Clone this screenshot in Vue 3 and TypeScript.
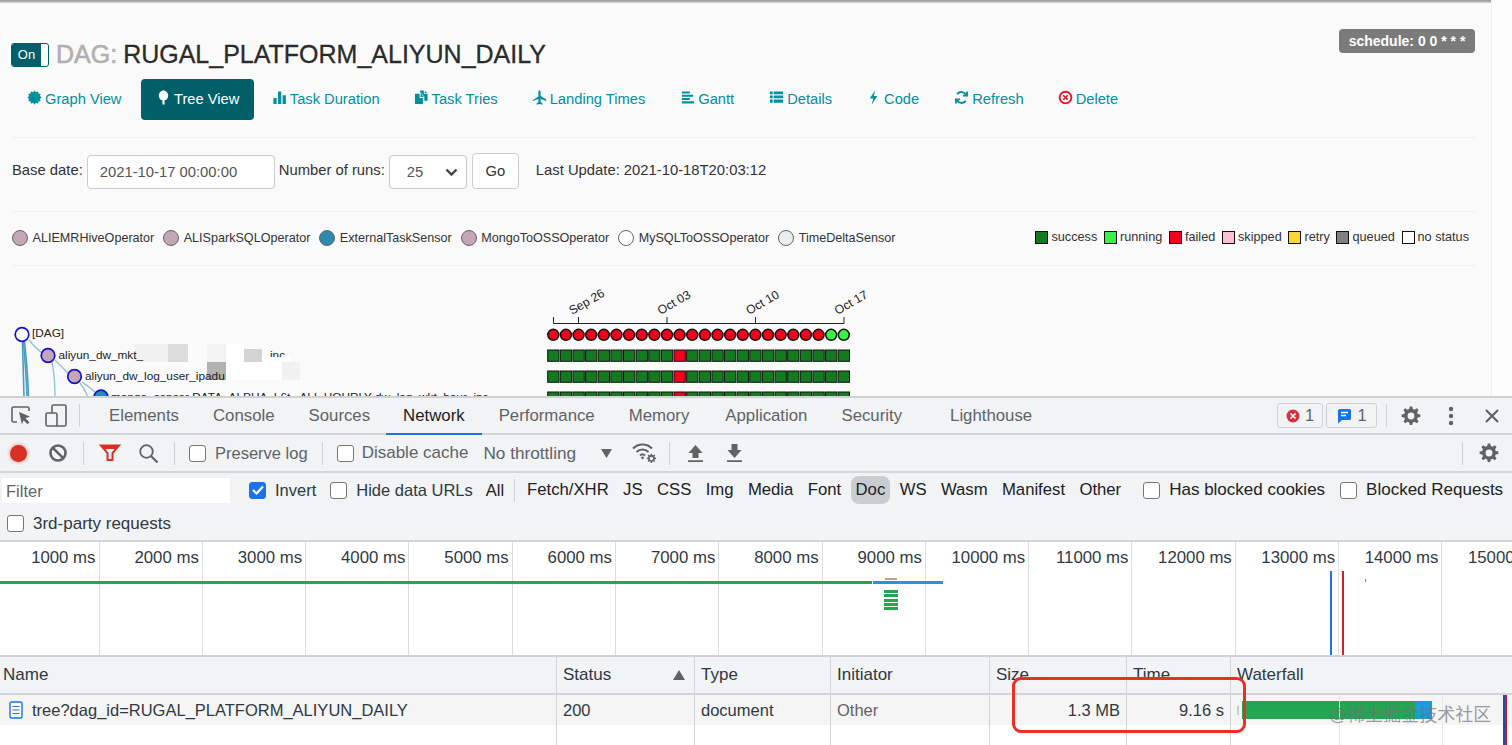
<script setup lang="ts">
const burst = (() => {
  let d = ''
  for (let i = 0; i < 24; i++) {
    const r = i % 2 ? 5.9 : 7.6
    const a = (i * Math.PI) / 12
    d += `${i ? 'L' : 'M'}${(8 + r * Math.cos(a)).toFixed(2)} ${(8 + r * Math.sin(a)).toFixed(2)}`
  }
  return d + 'z'
})()

const navItems = [
  { label: 'Graph View', d: burst },
  { label: 'Tree View', active: true, d: 'M8 .5C5.2.5 3 3 3 6c0 2.8 2 4.6 3.8 4.9V15.5h2.4v-4.6C11 10.6 13 8.8 13 6c0-3-2.2-5.500-5-5.500z' },
  { label: 'Task Duration', d: 'M1.500 8.500h3.500V15H1.500zM6.400 1.500h3.500V15H6.400zM11.300 5.500h3.500V15h-3.500z' },
  { label: 'Task Tries', d: 'M1 4h5v4.500h3.500V15H1zM7 3.500 7 7.500h3.500zM6.500.5h4v3.500h4v7.500h-3.500V6.800L6.500 2.500zM11.500.8l2.700 2.500h-2.700z' },
  { label: 'Landing Times', d: 'M8 .3c.8 0 1.200 1.200 1.200 2.700v3l6 4v1.700l-6-2v3.200l2 1.500v1.400L8 14.800l-3.200 1v-1.400l2-1.500v-3.200l-6 2V11l6-4V3C6.800 1.500 7.200.3 8 .3z' },
  { label: 'Gantt', cls: 'nudge', d: 'M2 1.500h8.500v2.200H2zM2 5h12v2.200H2zM2 8.500h8.500v2.200H2zM2 12h13v2.500H2z' },
  { label: 'Details', cls: 'nudge', d: 'M1 1.500h3v3H1zM5 1.500h10v3H5zM1 5.800h3v3H1zM5 5.800h10v3H5zM1 10h3v3.500H1zM5 10h10v3.500H5z' },
  { label: 'Code', d: 'M9.800 .3 4 9h3.700L6 15.800 12 6.500H8.300z' },
  { label: 'Refresh', cls: 'nudge', stroke: true, d: 'M13 5.500A5.800 5.800 0 0 0 3.300 4.300M3 10.500a5.800 5.800 0 0 0 9.700 1.200M14 1.500v4.500h-4.500M2 14.500V10h4.500' },
  { label: 'Delete', danger: true },
]

const operators = [
  { name: 'ALIEMRHiveOperator', color: '#c4a6b5' },
  { name: 'ALISparkSQLOperator', color: '#c4a6b5' },
  { name: 'ExternalTaskSensor', color: '#2b8cb0' },
  { name: 'MongoToOSSOperator', color: '#c4a6b5' },
  { name: 'MySQLToOSSOperator', color: '#ffffff' },
  { name: 'TimeDeltaSensor', color: '#e9edee' },
]

const states = [
  { name: 'success', color: '#157a1f' },
  { name: 'running', color: '#3cf04a' },
  { name: 'failed', color: '#f2001c' },
  { name: 'skipped', color: '#ffc0d4' },
  { name: 'retry', color: '#ffd52e' },
  { name: 'queued', color: '#808080' },
  { name: 'no status', color: '#ffffff' },
]

const runs = Array.from({ length: 24 }, (_, i) => 553.3 + i * 12.63)
const gridRows = [350, 371, 392]
const dateTicks = [
  { x: 578.500, label: 'Sep 26' },
  { x: 667, label: 'Oct 03' },
  { x: 755.500, label: 'Oct 10' },
  { x: 844, label: 'Oct 17' },
]
const treeNodes = [
  { x: 22, y: 334.500, fill: '#ffffff', label: '[DAG]', lx: 32, ly: 337 },
  { x: 48, y: 355.500, fill: '#c4a6b5', label: 'aliyun_dw_mkt_', lx: 58.500, ly: 359 },
  { x: 74.500, y: 376.500, fill: '#c4a6b5', label: 'aliyun_dw_log_user_ipadu', lx: 85, ly: 380 },
  { x: 101, y: 397, fill: '#2b8cb0', label: 'mongo_sensor DATA_ALPHA_L6t_ ALI_HOURLY dw_log_wkt_hour_inc', lx: 111, ly: 401 },
]
const mosaic = [
  { x: 135, y: 344, w: 33, h: 18, c: '#f1f1f1' },
  { x: 168, y: 344, w: 20, h: 18, c: '#dcdcdc' },
  { x: 207, y: 344, w: 19, h: 18, c: '#f4f4f4' },
  { x: 226, y: 344, w: 18, h: 36, c: '#ffffff' },
  { x: 244, y: 349, w: 18, h: 13, c: '#d4d4d4' },
  { x: 262, y: 362, w: 20, h: 18, c: '#ffffff' },
  { x: 207, y: 362, w: 19, h: 18, c: '#b2b2b2' },
  { x: 244, y: 362, w: 18, h: 18, c: '#ffffff' },
  { x: 282, y: 362, w: 18, h: 18, c: '#f1f1f1' },
]

const tabs = [
  { name: 'Elements', cls: 'w1' },
  { name: 'Console', cls: '' },
  { name: 'Sources', cls: '' },
  { name: 'Network', cls: 'active' },
  { name: 'Performance', cls: '' },
  { name: 'Memory', cls: '' },
  { name: 'Application', cls: 'mid' },
  { name: 'Security', cls: '' },
  { name: 'Lighthouse', cls: 'far' },
]
const types = ['Fetch/XHR', 'JS', 'CSS', 'Img', 'Media', 'Font', 'Doc', 'WS', 'Wasm', 'Manifest', 'Other']
const ticks = Array.from({ length: 15 }, (_, i) => `${(i + 1) * 1000} ms`)
const columns = ['Name', 'Status', 'Type', 'Initiator', 'Size', 'Time', 'Waterfall']
const gear = 'M8.900 1h-1.800l-.4 1.900-1.300.5L3.800 2.300 2.500 3.600l1.100 1.600-.5 1.300-1.900.4v1.800l1.900.4.5 1.300-1.100 1.600 1.300 1.300 1.600-1.100 1.300.5.4 1.900h1.800l.4-1.900 1.300-.5 1.600 1.100 1.300-1.300-1.100-1.600.5-1.300 1.900-.4V6.900l-1.900-.4-.5-1.300 1.100-1.600-1.300-1.300-1.600 1.100-1.300-.5zM8 5.500a2.500 2.500 0 1 1 0 5 2.500 2.500 0 0 1 0-5z'
</script>

<template>
  <div class="page">
    <section class="airflow">
      <div class="main">
        <div class="topbar"></div>
        <div class="content">
          <header class="title-row">
            <h1 class="title">
              <span class="toggle"><span class="toggle-on">On</span><span class="toggle-knob"></span></span>
              <span class="dag">DAG:</span>
              <span>RUGAL_PLATFORM_ALIYUN_DAILY</span>
            </h1>
            <span class="schedule">schedule: 0 0 * * *</span>
          </header>

          <nav class="nav">
            <a v-for="item in navItems" :key="item.label" class="nav-link" :class="[item.cls, { active: item.active }]">
              <svg v-if="item.danger" class="nav-icon" viewBox="0 0 16 16">
                <circle cx="8" cy="8" r="6.200" fill="none" stroke="#e8112d" stroke-width="2" />
                <path d="M5.600 5.600l4.800 4.800M10.400 5.600l-4.800 4.800" stroke="#e8112d" stroke-width="1.800" />
              </svg>
              <svg v-else-if="item.stroke" class="nav-icon" viewBox="0 0 16 16">
                <path :d="item.d" fill="none" stroke="currentColor" stroke-width="2" />
              </svg>
              <svg v-else class="nav-icon" viewBox="0 0 16 16"><path :d="item.d" fill="currentColor" /></svg>
              <span>{{ item.label }}</span>
            </a>
          </nav>

          <form class="run-form" @submit.prevent>
            <label class="form-label">Base date:</label>
            <span class="field date-field">2021-10-17 00:00:00</span>
            <label class="form-label">Number of runs:</label>
            <span class="field run-field">
              <span>25</span>
              <svg width="13" height="9" viewBox="0 0 13 9"><path d="M1.500 1.500 6.500 6.500l5-5" fill="none" stroke="#444" stroke-width="2.400" /></svg>
            </span>
            <button class="go">Go</button>
            <span class="form-label last-update">Last Update: 2021-10-18T20:03:12</span>
          </form>

          <div class="legend-row">
            <div class="operators">
              <span v-for="op in operators" :key="op.name" class="operator">
                <i class="op-dot" :style="{ background: op.color }"></i>{{ op.name }}
              </span>
            </div>
            <div class="states">
              <span v-for="s in states" :key="s.name" class="state">
                <i class="state-box" :style="{ background: s.color }"></i>{{ s.name }}
              </span>
            </div>
          </div>

          <div class="tree">
            <svg class="tree-svg" width="1491" height="130" viewBox="0 266 1491 130">
              <rect v-for="(m, i) in mosaic" :key="i" :x="m.x" :y="m.y" :width="m.w" :height="m.h" :fill="m.c" />
              <g fill="none" stroke="#8fc0d8" stroke-width="1.300">
                <path d="M29 340C34 346 38 350 42 353" />
                <path d="M52 362C54 372 55 384 55 397" />
                <path d="M55 360C60 365 64 369 68 373" />
                <path d="M80 383C84 388 86 392 88 397" />
                <path d="M82 382C86 385 91 388 95 392" />
              </g>
              <g fill="none" stroke="#4a9cc0" stroke-width="1.600">
                <path d="M22.500 342C23 360 23.500 380 24 397" />
                <path d="M23.500 342C25 360 26.500 380 27 397" />
                <path d="M24.500 342C26.500 360 28 380 28.500 397" />
              </g>
              <g v-for="n in treeNodes" :key="n.label">
                <circle :cx="n.x" :cy="n.y" r="6.800" :fill="n.fill" stroke="#1212d6" stroke-width="1.700" />
                <text :x="n.lx" :y="n.ly" class="tree-label">{{ n.label }}</text>
              </g>
              <text x="270" y="359" class="tree-label">inc</text>
              <rect x="262" y="357" width="28" height="5" fill="#ffffff" />

              <path d="M553.500 317v6.500H844V317M578.500 317v6M667 317v6M755.500 317v6" fill="none" stroke="#222" stroke-width="1" />
              <text v-for="t in dateTicks" :key="t.label" class="date-label"
                :transform="`translate(${t.x - 6.500} 315) rotate(-30)`">{{ t.label }}</text>
              <circle v-for="(x, i) in runs" :key="'c' + i" :cx="x" cy="334.800" r="5.500"
                :fill="i >= 22 ? '#3cf04a' : '#f2001c'" stroke="#111" stroke-width="1.500" />
              <g v-for="y in gridRows" :key="y">
                <rect v-for="(x, i) in runs" :key="i" :x="x - 5.600" :y="y" width="11.300" height="11.300"
                  :fill="i === 10 ? '#f2001c' : '#157a1f'" stroke="#111" stroke-width="1" />
              </g>
            </svg>
          </div>
        </div>
      </div>
      <div class="gutter"></div>
    </section>

    <section class="devtools">
      <div class="bar tabs-bar">
        <svg class="ic inspect" width="28" height="24" viewBox="0 0 28 24">
          <path d="M21 7V4.500A1.500 1.500 0 0 0 19.500 3h-14A1.500 1.500 0 0 0 4 4.500v12A1.500 1.500 0 0 0 5.500 18H9" fill="none" stroke="#5f6368" stroke-width="1.600" />
          <path d="M11 8l11 4.500-4.500 1.800 4 4-2 2-4-4L14 20.500z" fill="#5f6368" />
        </svg>
        <svg class="ic device" width="24" height="24" viewBox="0 0 24 24">
          <path d="M8 9V2.500A1.500 1.500 0 0 1 9.500 1h11A1.500 1.500 0 0 1 22 2.500v18a1.500 1.500 0 0 1-1.500 1.500H13M3.500 9h8A1.500 1.500 0 0 1 13 10.500v10a1.500 1.500 0 0 1-1.500 1.500h-8A1.500 1.500 0 0 1 2 20.500v-10A1.500 1.500 0 0 1 3.500 9z" fill="none" stroke="#5f6368" stroke-width="1.600" />
        </svg>
        <i class="sep"></i>
        <div class="tabs">
          <span v-for="t in tabs" :key="t.name" class="tab" :class="t.cls">{{ t.name }}</span>
        </div>
        <div class="tabs-end">
          <span class="count-badge err">
            <svg width="14" height="14" viewBox="0 0 14 14"><circle cx="7" cy="7" r="6.500" fill="#d93040" /><path d="M4.500 4.500l5 5M9.500 4.500l-5 5" stroke="#fff" stroke-width="1.700" /></svg>
            1
          </span>
          <span class="count-badge msg">
            <svg width="16" height="16" viewBox="0 0 16 16"><path d="M2 2.500A1.500 1.500 0 0 1 3.500 1h10A1.500 1.500 0 0 1 15 2.500v8a1.500 1.500 0 0 1-1.500 1.500H6l-4 3.500z" fill="#1a73e8" /><path d="M5 4.500h7M5 7.500h5" stroke="#fff" stroke-width="1.500" /></svg>
            1
          </span>
          <i class="sep sep-end"></i>
          <svg class="gear g1" width="22" height="22" viewBox="0 0 16 16"><path :d="gear" fill="#5f6368" fill-rule="evenodd" /></svg>
          <svg class="kebab" width="6" height="20" viewBox="0 0 6 20"><circle cx="3" cy="3" r="2.200" fill="#5f6368" /><circle cx="3" cy="10" r="2.200" fill="#5f6368" /><circle cx="3" cy="17" r="2.200" fill="#5f6368" /></svg>
          <svg class="close" width="14" height="14" viewBox="0 0 14 14"><path d="M1 1l12 12M13 1 1 13" stroke="#5f6368" stroke-width="2.200" /></svg>
        </div>
      </div>

      <div class="bar tool-bar">
        <span class="record"></span>
        <svg class="block" width="20" height="20" viewBox="0 0 20 20"><circle cx="10" cy="10" r="7.500" fill="none" stroke="#5f6368" stroke-width="2.600" /><path d="M4.800 4.800l10.400 10.400" stroke="#5f6368" stroke-width="2.600" /></svg>
        <i class="sep s1"></i>
        <svg class="funnel" width="22" height="18" viewBox="0 0 22 18"><path d="M2 1.500h18L13.500 9v7h-5V9z" fill="none" stroke="#d93025" stroke-width="2" /><path d="M2 1.500h18L17 5H5z" fill="#d93025" /></svg>
        <svg class="search" width="21" height="21" viewBox="0 0 21 21"><circle cx="8.500" cy="8.500" r="6.300" fill="none" stroke="#5f6368" stroke-width="1.800" /><path d="M13 13l6.500 6.500" stroke="#5f6368" stroke-width="2.200" /></svg>
        <i class="sep s2"></i>
        <label class="check c-preserve"><i class="box"></i>Preserve log</label>
        <i class="sep s3"></i>
        <label class="check c-cache"><i class="box"></i>Disable cache</label>
        <span class="throttle">No throttling</span>
        <svg class="caret" width="11" height="9" viewBox="0 0 11 9"><path d="M0 0h11L5.500 9z" fill="#5f6368" /></svg>
        <svg class="wifi" width="25" height="22" viewBox="0 0 25 22">
          <path d="M1 6.500C6 1 15 1 20 6.500M4.500 10c3.500-3.500 8.500-3.500 12 0M8 13.500c1.500-1.500 3.500-1.500 5 0" fill="none" stroke="#5f6368" stroke-width="2" />
          <circle cx="10.500" cy="15.800" r="1.400" fill="#5f6368" />
          <g transform="translate(14 11) scale(.68)"><path :d="gear" fill="#5f6368" fill-rule="evenodd" /></g>
        </svg>
        <i class="sep s4"></i>
        <svg class="updown up" width="15" height="18" viewBox="0 0 15 18"><path d="M7.500 1 14.500 9H10.500v5h-6V9H.5zM0 16.200h15V18H0z" fill="#5f6368" /></svg>
        <svg class="updown down" width="15" height="18" viewBox="0 0 15 18"><path d="M4.500 0h6v6h4l-7 8-7-8h4zM0 16.200h15V18H0z" fill="#5f6368" /></svg>
        <i class="sep s5"></i>
        <svg class="gear g2" width="22" height="22" viewBox="0 0 16 16"><path :d="gear" fill="#5f6368" fill-rule="evenodd" /></svg>
      </div>

      <div class="filter-row">
        <span class="filter-input">Filter</span>
        <label class="check c-invert">
          <i class="box checked"><svg width="12" height="10" viewBox="0 0 12 10"><path d="M1 5l3.500 3.500L11 1.500" fill="none" stroke="#fff" stroke-width="2.200" /></svg></i>Invert
        </label>
        <label class="check c-hide"><i class="box"></i>Hide data URLs</label>
        <span class="type-all">All</span>
        <i class="sep s6"></i>
        <div class="types">
          <span v-for="t in types" :key="t" class="type" :class="{ on: t === 'Doc' }">{{ t }}</span>
        </div>
        <label class="check c-cookies"><i class="box"></i>Has blocked cookies</label>
        <label class="check c-blocked"><i class="box"></i>Blocked Requests</label>
      </div>
      <div class="third-row">
        <label class="check"><i class="box"></i>3rd-party requests</label>
      </div>

      <div class="overview">
        <div v-for="t in ticks" :key="t" class="tick">{{ t }}</div>
        <i class="ov load"></i>
        <i class="ov recv"></i>
        <i class="ov stub"></i>
        <i v-for="n in 5" :key="n" class="ov mini" :style="{ top: 44 + n * 4.2 + 'px' }"></i>
        <i class="ov dcl"></i>
        <i class="ov loadline"></i>
        <i class="ov dot"></i>
      </div>

      <div class="table">
        <div class="grid head">
          <div v-for="c in columns" :key="c" class="cell">
            <span>{{ c }}</span>
            <svg v-if="c === 'Status'" class="sort" width="12" height="10" viewBox="0 0 12 10"><path d="M6 0l6 10H0z" fill="#5f6368" /></svg>
          </div>
        </div>
        <div class="grid data">
          <div class="cell name">
            <svg width="14" height="18" viewBox="0 0 14 18"><rect x="1" y="1" width="12" height="16" rx="1.500" fill="#fff" stroke="#1a73e8" stroke-width="1.400" /><path d="M3.500 5.500h7M3.500 9h7M3.500 12.500h7" stroke="#1a73e8" stroke-width="1.200" /></svg>
            <span>tree?dag_id=RUGAL_PLATFORM_ALIYUN_DAILY</span>
          </div>
          <div class="cell">200</div>
          <div class="cell">document</div>
          <div class="cell muted">Other</div>
          <div class="cell right">1.3 MB</div>
          <div class="cell right">9.16 s</div>
          <div class="cell waterfall">
            <i class="wf-stub"></i>
            <i class="wf-green"></i>
            <i class="wf-blue"></i>
          </div>
        </div>
        <div class="grid filler">
          <div v-for="c in columns" :key="c" class="cell"></div>
        </div>
        <i class="wf-grid g-a"></i>
        <i class="wf-grid g-b"></i>
        <i class="wf-end e-blue"></i>
        <i class="wf-end e-red"></i>
      </div>

      <div class="callout"></div>
      <div class="watermark">@稀土掘金技术社区</div>
    </section>
  </div>
</template>

<style scoped>
.page {
  width: 1512px;
  height: 745px;
  overflow: hidden;
  display: flex;
  flex-direction: column;
  font-family: "Liberation Sans", Arial, sans-serif;
  position: relative;
}

/* airflow page */
.airflow {
  height: 396px;
  flex: none;
  display: flex;
  background: #fafafa;
  overflow: hidden;
}
.main {
  width: 1491px;
  flex: none;
}
.gutter {
  flex: 1;
  border-left: 1px solid #f0f0f0;
  background: #fdfdfd;
}
.topbar {
  height: 3px;
  background: linear-gradient(#999, #b4b4b4 60%, #dedede);
}
.content {
  padding: 0 15px 0 12px;
}
.title-row {
  display: flex;
  justify-content: space-between;
  align-items: flex-start;
  height: 76px;
}
.title {
  margin: 38px 0 0 -1px;
  display: flex;
  align-items: center;
  font-size: 25px;
  line-height: 27px;
  font-weight: 400;
  color: #2b2b2b;
  -webkit-text-stroke: 0.3px #2b2b2b;
  white-space: nowrap;
}
.toggle {
  display: inline-flex;
  width: 38px;
  height: 24px;
  box-sizing: border-box;
  border: 1px solid #005f68;
  border-radius: 3px;
  overflow: hidden;
  margin-right: 7px;
  background: #fff;
  -webkit-text-stroke: 0;
  font-weight: 400;
}
.toggle-on {
  width: 29px;
  background: #005f68;
  color: #fff;
  font-size: 13px;
  line-height: 22px;
  text-align: center;
}
.dag {
  color: #b0b0b0;
  -webkit-text-stroke: 0.6px #b0b0b0;
  margin-right: 6px;
}
.schedule {
  margin-top: 26px;
  margin-right: 1px;
  width: 136px;
  height: 24px;
  line-height: 24px;
  border-radius: 4px;
  background: #7b7b7b;
  color: #fff;
  font-size: 14px;
  font-weight: 700;
  text-align: center;
  white-space: nowrap;
}
.nav {
  display: flex;
  height: 41px;
  gap: 2px;
  margin-bottom: 17px;
}
.nav-link {
  display: flex;
  align-items: center;
  gap: 3px;
  padding: 0 16px 2px;
  box-sizing: border-box;
  border-radius: 4px;
  font-size: 14.700px;
  color: #00909f;
  white-space: nowrap;
}
.nav-link:first-child {
  padding-left: 15px;
  padding-right: 17px;
}
.nav-link.active {
  background: #005f68;
  color: #fff;
  margin-left: 1px;
  padding-left: 14.500px;
  padding-right: 14.500px;
}
.nav-link.nudge {
  margin-left: 1px;
}
.nav-icon {
  width: 15px;
  height: 15px;
  flex: none;
  margin-top: -2px;
}
.run-form {
  height: 75px;
  box-sizing: border-box;
  border-top: 1px solid #f0f0f0;
  border-bottom: 1px solid #f0f0f0;
  display: flex;
  align-items: flex-start;
  padding-top: 16px;
  font-size: 14.800px;
  color: #333;
}
.form-label {
  line-height: 33px;
  white-space: nowrap;
}
.field {
  height: 34px;
  box-sizing: border-box;
  border: 1px solid #ccc;
  border-radius: 4px;
  background: #fff;
  line-height: 33px;
  margin-top: 1px;
  color: #555;
  display: flex;
  align-items: center;
}
.date-field {
  width: 188px;
  padding-left: 12px;
  margin: 1px 4px 0 4px;
}
.run-field {
  width: 78px;
  margin: 1px 5px 0 4px;
  padding: 0 8px 0 17px;
  justify-content: space-between;
}
.go {
  width: 47px;
  height: 36px;
  margin-top: -1px;
  border: 1px solid #ccc;
  border-radius: 4px;
  background: #fff;
  color: #333;
  font: inherit;
  padding: 0;
}
.last-update {
  margin-left: 17px;
}
.legend-row {
  height: 54px;
  box-sizing: border-box;
  border-bottom: 1px solid #f0f0f0;
  display: flex;
  justify-content: space-between;
  align-items: center;
  font-size: 12.700px;
  color: #333;
  padding: 0 7px 1px 0;
}
.operators {
  display: flex;
  gap: 8.900px;
}
.operator {
  display: flex;
  align-items: center;
  gap: 4.500px;
  white-space: nowrap;
  font-size: 12.600px;
}
.op-dot {
  width: 16px;
  height: 16px;
  box-sizing: border-box;
  border: 1px solid #666;
  border-radius: 50%;
}
.states {
  display: flex;
  gap: 6.700px;
  margin-top: -2px;
}
.state {
  display: flex;
  align-items: center;
  gap: 3px;
  white-space: nowrap;
}
.state-box {
  width: 13px;
  height: 13px;
  box-sizing: border-box;
  border: 1.500px solid #111;
}
.tree {
  height: 131px;
  margin-left: -12px;
}
.tree-svg {
  display: block;
}
.tree-label {
  font-size: 11.800px;
  fill: #222;
}
.date-label {
  font-size: 12.200px;
  fill: #222;
}

/* devtools */
.devtools {
  flex: 1;
  position: relative;
  background: #f1f3f4;
  color: #303942;
  font-size: 16.500px;
  font-family: "Liberation Sans", Arial, sans-serif;
  min-height: 0;
  display: flex;
  flex-direction: column;
}
.bar {
  display: flex;
  align-items: center;
  flex: none;
  position: relative;
}
.tabs-bar {
  height: 39px;
  box-sizing: border-box;
  border-top: 2px solid #cfd1d3;
  border-bottom: 2px solid #d3d5d7;
}
.ic.inspect {
  margin-left: 8px;
}
.ic.device {
  margin-left: 8px;
}
.sep {
  display: block;
  width: 1px;
  height: 23px;
  background: #cfd1d3;
  flex: none;
}
.tabs-bar > .sep {
  margin-left: 11px;
}
.tabs {
  display: flex;
  height: 100%;
  margin-left: 8px;
  font-size: 16.800px;
}
.tab {
  padding: 0 17px;
  line-height: 36px;
  height: 37px;
  box-sizing: border-box;
  color: #5f6368;
  white-space: nowrap;
}
.tab.w1 {
  margin-left: 4px;
}
.tab.active {
  color: #202124;
  border-bottom: 2px solid #1a73e8;
  margin-left: -1px;
}
.tab.mid {
  margin-left: 2px;
}
.tab.far {
  margin-left: 14px;
}
.tabs-end {
  margin-left: auto;
  display: flex;
  align-items: center;
  padding-right: 13px;
}
.count-badge {
  display: inline-flex;
  align-items: center;
  justify-content: center;
  gap: 5px;
  height: 25px;
  box-sizing: border-box;
  border: 1px solid #cfd1d3;
  border-radius: 3px;
  color: #5f6368;
}
.count-badge.err {
  width: 46px;
  margin-right: 3px;
}
.count-badge.msg {
  width: 51px;
}
.sep-end {
  margin: 0 13px 0 9px;
}
.g1 {
  margin-right: 26px;
}
.kebab {
  margin-right: 31px;
}
.tool-bar {
  height: 38px;
  box-sizing: border-box;
  border-bottom: 2px solid #d3d5d7;
}
.record {
  width: 17px;
  height: 17px;
  border-radius: 50%;
  background: #d93025;
  box-shadow: 0 0 3px 1px rgba(217, 48, 37, 0.35);
  margin-left: 10px;
}
.block {
  margin-left: 21px;
}
.tool-bar .s1 {
  margin-left: 15px;
}
.funnel {
  margin-left: 15px;
}
.search {
  margin-left: 17px;
}
.tool-bar .s2 {
  margin-left: 15px;
}
.check {
  display: flex;
  align-items: center;
  gap: 9px;
  white-space: nowrap;
  flex: none;
}
.tool-bar .check {
  color: #5f6368;
}
.box {
  width: 17px;
  height: 17px;
  box-sizing: border-box;
  border: 1px solid #777;
  border-radius: 3px;
  background: #fff;
  display: flex;
  align-items: center;
  justify-content: center;
  flex: none;
}
.box.checked {
  background: #1a73e8;
  border-color: #1a73e8;
}
.c-preserve {
  margin-left: 14px;
}
.tool-bar .s3 {
  margin-left: 14px;
}
.c-cache {
  margin-left: 14px;
  gap: 8px;
  font-size: 17px;
}
.throttle {
  margin-left: 15px;
  color: #5f6368;
  white-space: nowrap;
  font-size: 17.200px;
}
.caret {
  margin-left: 25px;
}
.wifi {
  margin-left: 20px;
}
.tool-bar .s4 {
  margin-left: 12px;
}
.updown.up {
  margin-left: 18px;
}
.updown.down {
  margin-left: 24px;
}
.tool-bar .s5 {
  margin-left: auto;
}
.g2 {
  margin: 0 12px 0 15px;
}
.filter-row {
  height: 37px;
  box-sizing: border-box;
  padding-bottom: 3px;
  flex: none;
  display: flex;
  align-items: center;
  color: #202124;
}
.filter-input {
  width: 228px;
  height: 25px;
  margin-left: 2px;
  padding-left: 4px;
  box-sizing: border-box;
  background: #fff;
  color: #5f6368;
  line-height: 26px;
}
.c-invert {
  margin-left: 19px;
  color: #303942;
}
.c-hide {
  margin-left: 14px;
  color: #303942;
}
.type-all {
  margin-left: 13px;
}
.filter-row .s6 {
  margin-left: 10px;
}
.types {
  display: flex;
  gap: 4.400px;
  margin-left: 7px;
  align-items: center;
  font-size: 16.700px;
}
.type {
  padding: 0 5px;
  height: 28px;
  line-height: 28px;
  border-radius: 8px;
  white-space: nowrap;
}
.type.on {
  background: #c9cdd1;
}
.c-cookies {
  margin-left: 17px;
  font-size: 17px;
}
.c-blocked {
  margin-left: 15px;
  font-size: 17px;
}
.third-row {
  height: 32px;
  box-sizing: border-box;
  flex: none;
  padding: 0 0 3px 7px;
  display: flex;
  align-items: center;
  border-bottom: 2px solid #d3d5d7;
  font-size: 17px;
}
.overview {
  height: 115px;
  flex: none;
  box-sizing: border-box;
  background: #fff;
  display: flex;
  position: relative;
  overflow: hidden;
  border-bottom: 2px solid #cfd1d3;
}
.tick {
  flex: none;
  width: 103.300px;
  box-sizing: border-box;
  border-right: 1px solid #ddd;
  text-align: right;
  padding: 6px 3px 0 0;
  color: #303942;
  white-space: nowrap;
  font-size: 16.800px;
}
.tick:first-child {
  width: 99.500px;
}
.ov {
  position: absolute;
  display: block;
}
.load {
  left: 0;
  top: 39px;
  width: 872px;
  height: 3px;
  background: #22a651;
}
.recv {
  left: 873px;
  top: 39px;
  width: 70px;
  height: 3px;
  background: #1a9ae0;
}
.stub {
  left: 885px;
  top: 36px;
  width: 12px;
  height: 2px;
  background: #aaa;
}
.mini {
  left: 884px;
  width: 14px;
  height: 3px;
  background: #22a651;
}
.dcl {
  left: 1330px;
  top: 29px;
  width: 1.500px;
  height: 90px;
  background: #1a73e8;
}
.loadline {
  left: 1342px;
  top: 29px;
  width: 2px;
  height: 90px;
  background: #d0202a;
}
.dot {
  left: 1365px;
  top: 37px;
  width: 1px;
  height: 3px;
  background: #888;
}
.table {
  flex: 1;
  background: #fff;
  display: flex;
  flex-direction: column;
  position: relative;
  min-height: 0;
}
.grid {
  display: grid;
  grid-template-columns: 557px 138px 136px 159px 137px 104px 1fr;
}
.cell {
  box-sizing: border-box;
  border-right: 1px solid #d3d5d7;
  padding: 0 6px 0 6px;
  display: flex;
  align-items: center;
  white-space: nowrap;
}
.cell:last-child {
  border-right: 0;
}
.head {
  height: 38px;
  box-sizing: border-box;
  background: #f1f3f4;
  border-bottom: 2px solid #d3d5d7;
  font-size: 17px;
}
.head .cell {
  justify-content: space-between;
}
.head .cell:first-child {
  padding-left: 3px;
}
.sort {
  margin-right: 3px;
}
.data {
  height: 30px;
  background: #f5f5f5;
}
.cell.name {
  padding-left: 9px;
  gap: 9px;
}
.cell.muted {
  color: #5f6368;
}
.cell.right {
  justify-content: flex-end;
}
.waterfall {
  position: relative;
}
.waterfall i {
  position: absolute;
  display: block;
}
.wf-stub {
  left: 6px;
  top: 11px;
  width: 2px;
  height: 9px;
  background: #ccc;
}
.wf-green {
  left: 11px;
  top: 6px;
  width: 173px;
  height: 18px;
  background: #22a651;
}
.wf-blue {
  left: 184px;
  top: 6px;
  width: 17px;
  height: 18px;
  background: #1a9ae0;
}
.filler {
  flex: 1;
}
.wf-grid {
  position: absolute;
  display: block;
  top: 38px;
  bottom: 0;
  width: 1px;
  background: #e6e6e6;
}
.g-a {
  left: 1339px;
}
.g-b {
  left: 1442px;
}
.wf-end {
  position: absolute;
  display: block;
  top: 38px;
  bottom: 0;
  width: 2px;
}
.e-blue {
  left: 1503px;
  background: #1a4fa8;
}
.e-red {
  left: 1505px;
  background: #c0202a;
}
.callout {
  position: absolute;
  left: 1012px;
  top: 281px;
  width: 234px;
  height: 56px;
  box-sizing: border-box;
  border: 3.500px solid #ea2f27;
  border-radius: 9px;
}
.watermark {
  position: absolute;
  left: 1329px;
  top: 304px;
  font-family: "Liberation Sans", "Noto Sans CJK SC", sans-serif;
  font-size: 18px;
  color: rgba(110, 115, 120, 0.7);
  white-space: nowrap;
}
</style>
